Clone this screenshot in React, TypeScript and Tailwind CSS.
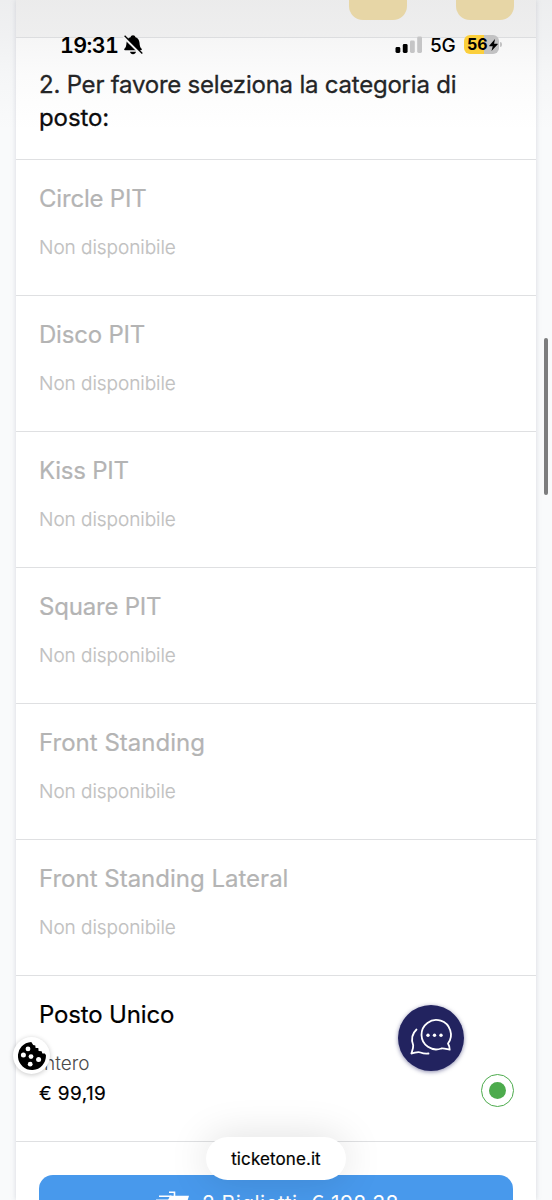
import type { ReactNode } from "react";

const unavailable = [
  { name: "Circle PIT", tracking: "tracking-[-0.2px]" },
  { name: "Disco PIT", tracking: "tracking-[-0.2px]" },
  { name: "Kiss PIT", tracking: "tracking-[-0.25px]" },
  { name: "Square PIT", tracking: "tracking-[-0.2px]" },
  { name: "Front Standing", tracking: "tracking-[0.02px]" },
  { name: "Front Standing Lateral", tracking: "tracking-[0px]" },
];

function Row({ children, className }: { children: ReactNode; className: string }) {
  return <div className={`border-b border-[#dfe0e2] pl-[23px] pr-[22px] pt-[22.5px] ${className}`}>{children}</div>;
}

function StatusBar() {
  return (
    <div className="absolute inset-x-0 top-0 z-20 flex h-[90px] items-start pl-[60px] pr-[50px] pt-[33px] text-black">
      <span className="w-[59px] whitespace-nowrap text-[21.5px] font-semibold tabular-nums leading-6 tracking-[-0.6px]">19:31</span>
      <svg className="ml-[4px] mt-[1px] h-[22px] w-[20px]" viewBox="0 0 20 22">
        <path d="M10 1.2c1.3 0 2.2.8 2.5 2 2.4.9 3.8 2.9 4 5.6.2 3.2.7 4.600 2.100 6 .5.6.2 1.5-.6 1.5H2c-.8 0-1.1-.9-.6-1.5 1.4-1.4 1.9-2.8 2.1-6 .2-2.7 1.6-4.7 4-5.6.3-1.2 1.2-2 2.5-2ZM7 17.800h6c-.3 1.400-1.400 2.400-3 2.400s-2.700-1-3-2.400Z" fill="#000" />
        <path d="M0.800 3 18 20.200" stroke="#f3f3f3" strokeWidth="2.600" />
        <path d="M1.600 1.800 19.300 19.500" stroke="#000" strokeWidth="1.400" />
      </svg>
      <div className="grow" />
      <svg className="mt-[2px] h-[20px] w-[28px]" viewBox="0 0 28 20">
        <rect x="1.500" y="12" width="4.800" height="6" rx="1.400" fill="#000" />
        <rect x="8.800" y="9" width="4.800" height="9" rx="1.400" fill="#000" />
        <rect x="16" y="5.500" width="4.800" height="12.500" rx="1.400" fill="#c5c5c6" />
        <rect x="23.200" y="1.500" width="4.800" height="16.500" rx="1.400" fill="#c5c5c6" />
      </svg>
      <span className="ml-[8px] w-[26px] whitespace-nowrap text-[19px] font-medium leading-[25px] tracking-[-0.3px]">5G</span>
      <div className="ml-[8px] mt-[2px] flex h-[19px] w-[35px] items-center overflow-hidden rounded-[6px] bg-[linear-gradient(90deg,#fbcf3c_0_56%,#c2c2c3_56%)] pl-[3px]">
        <span className="w-[21px] whitespace-nowrap text-[16px] font-bold leading-[19px] tracking-[0px]">56</span>
        <svg className="ml-[0.5px] h-[12px] w-[9px]" viewBox="0 0 9 12">
          <path d="M6 0 .4 6.500c-.3.400-.1.700.3.700h3L2.500 12 8.600 5.400c.3-.3.1-.700-.3-.700H5.100Z" fill="#000" />
        </svg>
      </div>
      <div className="ml-[1px] mt-[9px] h-[5px] w-[2px] rounded-r-full bg-[#c2c2c3]" />
    </div>
  );
}

function CookieButton() {
  return (
    <div className="absolute left-[13px] top-[1037px] flex size-[37px] items-center justify-center rounded-full bg-white shadow-[0_1px_5px_rgba(0,0,0,0.22)]">
      <svg className="size-[28px]" viewBox="0 0 28 28">
        <path d="M13.300 0A14 14 0 1 0 27.900 13l-1.200-1.600-2.300.2-.8-2.400-3-.2-.300-2.900-2.700-.200-.300-2.300-2.100-.700Z" fill="#000" />
        <g fill="#fff">
          <circle cx="10" cy="6.900" r="2.400" />
          <circle cx="5.400" cy="12.900" r="2.500" />
          <circle cx="13" cy="14.600" r="2.400" />
          <circle cx="20.600" cy="17.500" r="2.500" />
          <circle cx="12.200" cy="22.200" r="2.400" />
        </g>
      </svg>
    </div>
  );
}

function ChatButton() {
  return (
    <div className="absolute left-[398px] top-[1005px] size-[66px] rounded-full bg-[#22235f] shadow-[0_1px_4px_rgba(20,20,90,0.5)]">
      <svg className="size-[66px]" viewBox="0 0 66 66" fill="none" stroke="#fff" strokeWidth="1.800" strokeLinecap="round" strokeLinejoin="round">
        <path d="M50 38.500A14.700 14.700 0 1 0 43.300 43.500C46 43.200 48.200 44 51.700 44.700 51.900 42.300 51.200 40.600 50 38.500Z" />
        <path d="M18.500 24.500C13.500 29.200 13 34.200 15.200 40.200 15.400 43.400 14.100 46 13.400 48.500 17.200 48 19.500 46.300 22.500 47.500 25 48.500 27.500 48.800 30.500 48.500" />
        <g fill="#fff" stroke="none">
          <circle cx="30" cy="30.300" r="1.700" />
          <circle cx="36.500" cy="30.300" r="1.700" />
          <circle cx="43" cy="30.300" r="1.700" />
        </g>
      </svg>
    </div>
  );
}

export default function App() {
  return (
    <div className="relative h-[1200px] w-[552px] overflow-hidden bg-[#f9fafb] font-['Inter',sans-serif]">
      <main className="mx-[16px] h-[1200px] bg-white shadow-[0_0_5px_rgba(110,120,140,0.25)]">
        <div className="flex h-[38px] justify-end gap-[49px] border-b border-[#e3e4e6] bg-[#f7f7f7] pr-[22px]">
          <div className="relative z-10 h-[20px] w-[58px] rounded-b-[14px] bg-[#e7d6a6]" />
          <div className="relative z-10 h-[20px] w-[58px] rounded-b-[14px] bg-[#e7d6a6]" />
        </div>
        <h1 className="relative z-10 h-[122px] border-b border-[#dfe0e2] pl-[23px] pt-[30px] text-[24px] leading-[33px]">
          <span className="block whitespace-nowrap tracking-[-0.22px] text-[#242526] [-webkit-text-stroke:0.3px_#242526]">2. Per favore seleziona la categoria di</span>
          <span className="block tracking-[-0.1px] text-[#0c0c0d] [-webkit-text-stroke:0.3px_#0c0c0d]">posto:</span>
        </h1>
        {unavailable.map((item) => (
          <Row key={item.name} className="h-[136px]">
            <h2 className={`whitespace-nowrap text-[24px] leading-8 text-[#b4b4b4] [-webkit-text-stroke:0.2px_#b4b4b4] ${item.tracking}`}>{item.name}</h2>
            <p className="mt-[21px] text-[19px] font-light leading-6 tracking-[-0.05px] text-[#c0c0c0] [-webkit-text-stroke:0.2px_#c0c0c0]">Non disponibile</p>
          </Row>
        ))}
        <Row className="h-[166px]">
          <h2 className="text-[24px] leading-8 tracking-[-0.15px] text-black [-webkit-text-stroke:0.2px_#000]">Posto Unico</h2>
          <div className="flex justify-between pt-[21px]">
            <div>
              <p className="text-[19px] font-light leading-6 text-[#4a4a4a]">Intero</p>
              <p className="mt-[6px] text-[19px] leading-6 tracking-[0.4px] text-black [-webkit-text-stroke:0.2px_#000]">€ 99,19</p>
            </div>
            <div className="mt-[22.5px] flex size-[33px] items-center justify-center rounded-full border border-[#4dab4d]">
              <div className="size-[17px] rounded-full bg-[#4dab4d]" />
            </div>
          </div>
        </Row>
        <div className="px-[23px] pt-[33px]">
          <div className="flex h-[60px] items-start rounded-t-[14px] bg-[#4899ec] pl-[115px] pt-[13px] text-white">
            <svg className="mt-[3px] h-[24px] w-[38px]" viewBox="0 0 38 24">
              <path d="M5 5.200h12.500M2 9.400h14M0 13.500h14M15 1.300h5.500v4" fill="none" stroke="#fff" strokeWidth="1.600" />
              <path d="M16 4.800h19L31 18H10Z" fill="#fff" />
            </svg>
            <span className="ml-[10px] whitespace-nowrap text-[21px] leading-[32px] tracking-[0.4px]">2 Biglietti, € 198,38</span>
          </div>
        </div>
      </main>
      <div className="absolute inset-x-0 top-0 h-[150px] bg-[linear-gradient(180deg,rgba(150,150,153,0.12)_0,rgba(150,150,153,0.09)_36px,rgba(160,160,162,0.045)_75px,rgba(255,255,255,0)_130px)]" />
      <StatusBar />
      <div className="absolute left-[544px] top-[338px] h-[157px] w-[4px] rounded-full bg-[#7d7d7e]" />
      <CookieButton />
      <ChatButton />
      <div className="absolute left-[206px] top-[1137px] flex h-[43px] w-[140px] items-center justify-center rounded-full bg-white text-[17px] leading-6 tracking-[0.1px] text-black shadow-[0_0_40px_rgba(0,0,0,0.13)] [-webkit-text-stroke:0.2px_#000]">
        ticketone.it
      </div>
    </div>
  );
}
